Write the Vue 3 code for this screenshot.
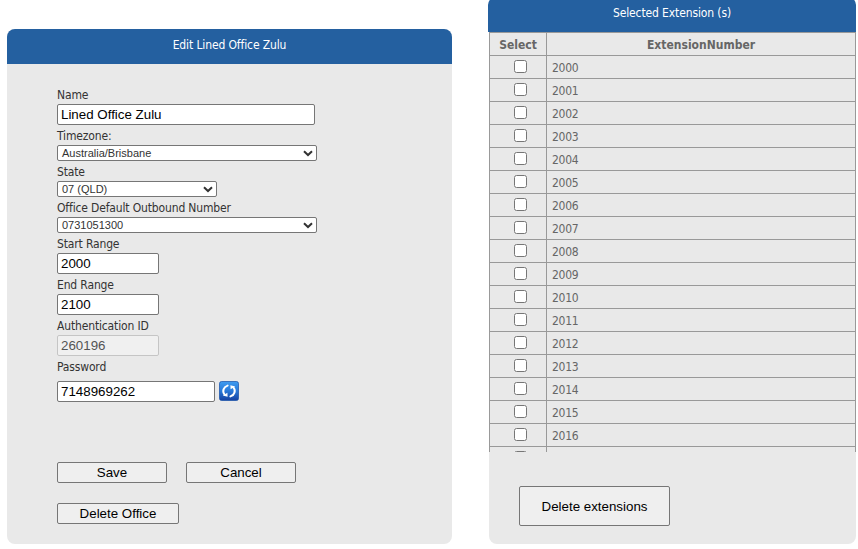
<script setup>
import { ref } from 'vue'

const fields = ref([
  { label: 'Name', type: 'text', value: 'Lined Office Zulu', size: 'w258' },
  { label: 'Timezone:', type: 'select', value: 'Australia/Brisbane', size: 'w260' },
  { label: 'State', type: 'select', value: '07 (QLD)', size: 'w160' },
  { label: 'Office Default Outbound Number', type: 'select', value: '0731051300', size: 'w260' },
  { label: 'Start Range', type: 'text', value: '2000', size: 'w102' },
  { label: 'End Range', type: 'text', value: '2100', size: 'w102' },
  { label: 'Authentication ID', type: 'text', value: '260196', size: 'w102', disabled: true },
])
const password = ref('7148969262')
const extensions = [...Array.from({ length: 17 }, (_, i) => 2000 + i), '']
</script>

<template>
  <main class="page">
    <section class="panel office">
      <h2 class="title"><span>Edit Lined Office Zulu</span></h2>
      <form class="form" @submit.prevent>
        <div v-for="f in fields" :key="f.label" class="field">
          <label class="label">{{ f.label }}</label>
          <div v-if="f.type === 'select'" class="select" :class="f.size">
            <span>{{ f.value }}</span>
            <svg width="10" height="7" viewBox="0 0 10 7"><path d="M1 1.2 L5 5 L9 1.2" fill="none" stroke="#333" stroke-width="2" /></svg>
          </div>
          <input v-else v-model="f.value" class="input" :class="f.size" :disabled="f.disabled" />
        </div>
        <div class="field">
          <label class="label password-label">Password</label>
          <div class="password">
            <input v-model="password" class="input w158" />
            <svg class="refresh" width="20" height="20" viewBox="0 0 20 20">
              <defs>
                <linearGradient id="blue" x1="0" y1="0" x2="0" y2="1">
                  <stop offset="0" stop-color="#3f9cf0" />
                  <stop offset=".5" stop-color="#2878d8" />
                  <stop offset="1" stop-color="#1540a0" />
                </linearGradient>
              </defs>
              <rect x=".5" y=".5" width="19" height="19" rx="2" fill="url(#blue)" stroke="#1650a8" stroke-opacity=".7" />
              <g fill="none" stroke="#fff" stroke-width="2" stroke-linecap="round">
                <path d="M8.6 4.6 C4.4 5.8 3 10.6 5.6 13.6" />
                <path d="M11.4 15.4 C15.6 14.2 17 9.4 14.4 6.4" />
              </g>
              <path d="M3.8 14.6 L8.4 11.8 L8.6 15.8z M16.2 5.4 L11.6 8.2 L11.4 4.2z" fill="#fff" />
            </svg>
          </div>
        </div>
        <div class="actions">
          <button class="button w110">Save</button>
          <button class="button w110">Cancel</button>
        </div>
        <button class="button w122">Delete Office</button>
      </form>
    </section>

    <section class="extensions">
      <h2 class="title"><span>Selected Extension (s)</span></h2>
      <div class="body">
        <div class="scroll">
          <table>
            <thead>
              <tr><th class="pick"><span>Select</span></th><th><span>ExtensionNumber</span></th></tr>
            </thead>
            <tbody>
              <tr v-for="n in extensions" :key="n">
                <td class="pick"><input type="checkbox" class="check" /></td>
                <td class="number">{{ n }}</td>
              </tr>
            </tbody>
          </table>
        </div>
        <button class="button big">Delete extensions</button>
      </div>
    </section>
  </main>
</template>

<style>
body { background: #fff; overflow: hidden; }
</style>

<style scoped>
* { box-sizing: border-box; }
.page {
  display: flex;
  align-items: flex-start;
  height: 549px;
  padding-left: 7px;
  overflow: hidden;
  font-family: "DejaVu Sans Condensed", "DejaVu Sans", sans-serif;
  font-stretch: condensed;
  font-size: 12px;
  color: #333;
}
.panel {
  width: 445px;
  height: 515px;
  margin-top: 29px;
  background: #e9e9e9;
  border-radius: 8px;
  overflow: hidden;
}
.title {
  height: 35px;
  margin: 0;
  background: #2460a0;
  color: #fff;
  font-size: 12px;
  font-weight: 400;
  line-height: 32px;
  text-align: center;
  letter-spacing: -0.12px;
}
.form { padding: 20px 0 0 50px; }
.label {
  display: block;
  height: 20px;
  line-height: 23px;
  letter-spacing: -0.15px;
  white-space: nowrap;
}
.password-label { height: 25px; }
.input {
  display: block;
  height: 21px;
  margin: 0;
  padding: 0 3px;
  border: 1px solid #767676;
  border-radius: 2px;
  background: #fff;
  color: #000;
  font: 13.333px "Liberation Sans", Arial, sans-serif;
}
.input:disabled {
  border-color: #c5c5c5;
  background: #f0f0f0;
  color: #545454;
}
.select {
  display: flex;
  align-items: center;
  justify-content: space-between;
  height: 16px;
  padding: 0 3px 0 4px;
  border: 1px solid #767676;
  border-radius: 2px;
  background: #fff;
  font: 11px/14px "Liberation Sans", Arial, sans-serif;
  letter-spacing: 0;
}
.w258 { width: 258px; }
.w260 { width: 260px; }
.w160 { width: 160px; }
.w158 { width: 158px; }
.w102 { width: 102px; }
.w110 { width: 110px; }
.w122 { width: 122px; }
.password { display: flex; gap: 4px; }
.actions { display: flex; gap: 19px; margin: 60px 0 20px; }
.button {
  display: block;
  height: 21px;
  padding: 0;
  border: 1px solid #767676;
  border-radius: 2px;
  background: #efefef;
  color: #000;
  font: 13.333px "Liberation Sans", Arial, sans-serif;
}
.extensions { width: 368px; margin: -3px 0 0 36px; }
.extensions .title { border-radius: 8px 8px 0 0; }
.body {
  height: 512px;
  margin-left: 1px;
  background: #e9e9e9;
  border-radius: 0 0 8px 8px;
}
.scroll { height: 420px; overflow: hidden; }
table {
  width: 367px;
  table-layout: fixed;
  border-spacing: 0;
  border-top: 1px solid #999;
  border-left: 1px solid #999;
  color: #666;
}
th, td {
  height: 23px;
  padding: 0;
  border-right: 1px solid #999;
  border-bottom: 1px solid #999;
  line-height: 20px;
}
th, .number { padding-top: 2px; }
th { font-weight: 700; }
.pick { width: 57px; text-align: center; }
.number { padding-left: 5px; letter-spacing: -0.25px; }
.check {
  display: block;
  width: 13px;
  height: 13px;
  margin: -1px auto 0;
  position: relative;
  left: 2px;
}
.big { width: 151px; height: 40px; margin: 34px 0 0 30px; }
</style>
